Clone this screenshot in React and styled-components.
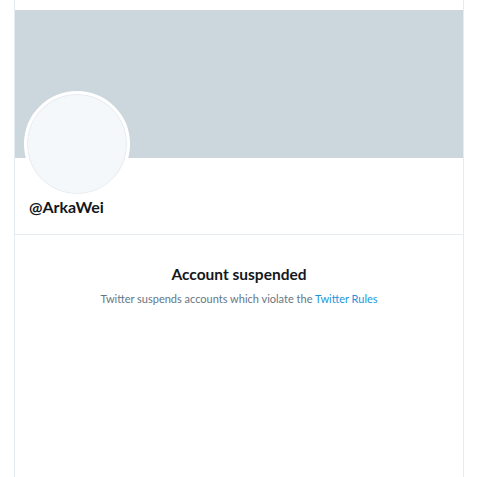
import React from 'react'
import styled, { createGlobalStyle } from 'styled-components'

const GlobalStyle = createGlobalStyle`
  html, body {
    margin: 0;
    padding: 0;
    background: #fff;
    font-family: Lato, "Noto Sans", "Liberation Sans", sans-serif;
  }
`

const Page = styled.div`
  display: flex;
  min-height: 477px;
`

const Column = styled.main`
  margin-left: 14px;
  width: 448px;
  border-left: 1px solid #e6ecf0;
  border-right: 1px solid #e6ecf0;
  padding-top: 10px;
  min-height: 467px;
`

const Banner = styled.div`
  height: 148px;
  background: #ccd6dd;
`

const ProfileHead = styled.div`
  padding: 0 15px 17px 9px;
  border-bottom: 1px solid #e6ecf0;
`

const Avatar = styled.div`
  width: 100px;
  height: 100px;
  margin-top: -67px;
  border-radius: 50%;
  background: #f5f8fa;
  border: 3px solid #fff;
  box-shadow: inset 0 0 0 1px #e6ecf0;
`

const Handle = styled.h1`
  margin: 0 0 0 5px;
  font-size: 16px;
  font-weight: 700;
  line-height: 20px;
  color: #14171a;
`

const Notice = styled.section`
  display: flex;
  flex-direction: column;
  align-items: center;
  padding-top: 29px;
`

const Title = styled.h2`
  margin: 0;
  font-size: 15.5px;
  font-weight: 700;
  line-height: 20px;
  color: #14171a;
`

const Text = styled.p`
  margin: 7px 0 0;
  font-size: 11px;
  line-height: 16px;
  color: #657786;
`

const Link = styled.a`
  color: #1b95e0;
  text-decoration: none;
`

const App = () => {
  return (
    <Page>
      <GlobalStyle />
      <Column>
        <Banner />
        <ProfileHead>
          <Avatar />
          <Handle>@ArkaWei</Handle>
        </ProfileHead>
        <Notice>
          <Title>Account suspended</Title>
          <Text>
            Twitter suspends accounts which violate the <Link href="#">Twitter Rules</Link>
          </Text>
        </Notice>
      </Column>
    </Page>
  )
}

export default App
